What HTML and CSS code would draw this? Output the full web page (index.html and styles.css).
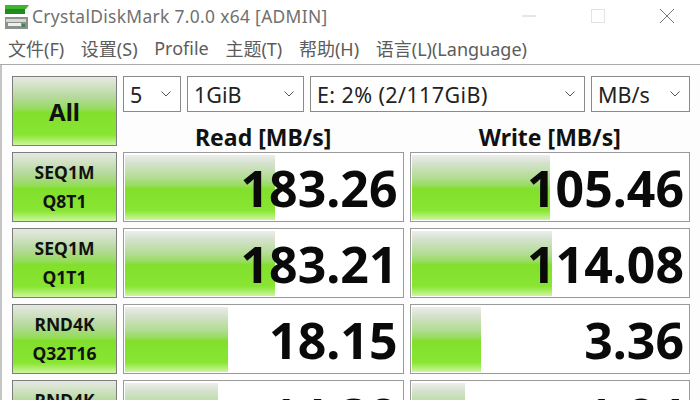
FILE: index.html
```html
<!DOCTYPE html>
<html lang="en">

<head>
    <meta charset="UTF-8">
    <meta name="viewport" content="width=device-width, initial-scale=1.0">
    <title>CrystalDiskMark</title>
    <link rel="stylesheet" href="styles.css">
</head>

<body>

    <div class="titlebar">
        <svg class="app-icon" width="28" height="28" viewBox="0 0 28 28">
            <path d="M4 3h24l-3 4H4z" fill="#3fb52b"/>
            <rect x="4" y="7" width="20" height="5" fill="#1f8a1f"/>
            <path d="M4 15h23v12H4z" fill="#8b918c"/>
            <rect x="5" y="17" width="20" height="3" fill="#d5d9d6"/>
            <rect x="7" y="21" width="13" height="3" fill="#eef0ee"/>
            <rect x="21" y="22" width="3" height="3" fill="#4c7f52"/>
        </svg>
        <span class="app-title">CrystalDiskMark 7.0.0 x64 [ADMIN]</span>
        <div class="win-buttons">
            <svg width="16" height="16" viewBox="0 0 16 16"><path d="M1 8h14" stroke="#ccc" fill="none"/></svg>
            <svg width="16" height="16" viewBox="0 0 16 16"><rect x="1.5" y="1.5" width="13" height="13" stroke="#e2e2e2" fill="none"/></svg>
            <svg width="16" height="16" viewBox="0 0 16 16"><path d="M1 1l14 14M15 1L1 15" stroke="#777" fill="none"/></svg>
        </div>
    </div>

    <div class="menubar">
        <span>文件(F)</span>
        <span>设置(S)</span>
        <span>Profile</span>
        <span>主题(T)</span>
        <span>帮助(H)</span>
        <span>语言(L)(Language)</span>
    </div>

    <div class="main">
        <div class="top">
            <div class="btn btn-all">All</div>
            <div class="top-right">
                <div class="selects">
                    <div class="select sel-count">5 <svg class="chev" width="10" height="6" viewBox="0 0 10 6"><path d="M0.5 0.5L5 5l4.5-4.5" stroke="#555" fill="none"/></svg></div>
                    <div class="select sel-size">1GiB <svg class="chev" width="10" height="6" viewBox="0 0 10 6"><path d="M0.5 0.5L5 5l4.5-4.5" stroke="#555" fill="none"/></svg></div>
                    <div class="select sel-drive">E: 2% (2/117GiB) <svg class="chev" width="10" height="6" viewBox="0 0 10 6"><path d="M0.5 0.5L5 5l4.5-4.5" stroke="#555" fill="none"/></svg></div>
                    <div class="select sel-unit">MB/s <svg class="chev" width="10" height="6" viewBox="0 0 10 6"><path d="M0.5 0.5L5 5l4.5-4.5" stroke="#555" fill="none"/></svg></div>
                </div>
                <div class="heads">
                    <div class="head">Read [MB/s]</div>
                    <div class="head">Write [MB/s]</div>
                </div>
            </div>
        </div>

        <div class="row">
            <div class="btn btn-test">SEQ1M<br>Q8T1</div>
            <div class="cell"><div class="bar" style="width: 150px"></div><span class="num">183.26</span></div>
            <div class="cell"><div class="bar" style="width: 138px"></div><span class="num">105.46</span></div>
        </div>
        <div class="row">
            <div class="btn btn-test">SEQ1M<br>Q1T1</div>
            <div class="cell"><div class="bar" style="width: 150px"></div><span class="num">183.21</span></div>
            <div class="cell"><div class="bar" style="width: 140px"></div><span class="num">114.08</span></div>
        </div>
        <div class="row">
            <div class="btn btn-test">RND4K<br>Q32T16</div>
            <div class="cell"><div class="bar" style="width: 103px"></div><span class="num">18.15</span></div>
            <div class="cell"><div class="bar" style="width: 69px"></div><span class="num">3.36</span></div>
        </div>
        <div class="row">
            <div class="btn btn-test">RND4K<br>Q1T1</div>
            <div class="cell"><div class="bar" style="width: 93px"></div><span class="num">14.38</span></div>
            <div class="cell"><div class="bar" style="width: 53px"></div><span class="num">1.84</span></div>
        </div>
    </div>

</body>

</html>
```

FILE: styles.css
```css
html,
body {
    margin: 0;
    height: 400px;
    overflow: hidden;
}

body {
    font-family: "Noto Sans", "Noto Sans CJK SC", sans-serif;
    background: #fff;
    color: #111;
}

.titlebar {
    display: flex;
    align-items: center;
    height: 32px;
}

.app-icon {
    margin-left: 1px;
    margin-right: 3px;
}

.app-title {
    font-size: 17.4px;
    color: #707070;
    letter-spacing: 0.33px;
}

.win-buttons {
    display: flex;
    gap: 53px;
    margin-left: auto;
    margin-right: 25px;
}

.menubar {
    display: flex;
    gap: 16.7px;
    align-items: center;
    box-sizing: border-box;
    height: 33px;
    padding-left: 8px;
    font-size: 18px;
    color: #5c5c5c;
    border-bottom: 1px solid #aaa;
}

.main {
    padding: 11px 10px 0 10px;
    border-left: 2px solid #c4c4c4;
    background: #fdfdfd;
}

.top {
    display: flex;
    gap: 6px;
    height: 76px;
}

.btn {
    display: flex;
    align-items: center;
    justify-content: center;
    box-sizing: border-box;
    width: 105px;
    flex: none;
    border: 1px solid #7d7d7d;
    font-weight: 700;
    text-align: center;
    background: linear-gradient(#e6e9e3 0, #b5d99c 30%, #94dc58 48%, #82e02c 52%, #88e632 85%, #cdf59e 100%);
}

.btn-all {
    height: 70px;
    font-size: 24px;
}

.btn-test {
    font-size: 17.5px;
    line-height: 29px;
}

.top-right {
    flex: 1;
}

.selects {
    display: flex;
    gap: 6px;
    height: 36px;
}

.select {
    display: flex;
    align-items: center;
    justify-content: space-between;
    box-sizing: border-box;
    height: 36px;
    padding: 0 9px 0 6px;
    font-size: 21.5px;
    color: #222;
    background: #fff;
    border: 1px solid #8a8a8a;
}

.sel-count {
    width: 58px;
}

.sel-size {
    width: 117px;
}

.sel-drive {
    width: 275px;
    letter-spacing: 0.4px;
}

.sel-unit {
    width: 99px;
}

.heads {
    display: flex;
    gap: 6px;
    height: 40px;
}

.head {
    flex: 1;
    text-align: center;
    font-size: 23px;
    font-weight: 700;
    line-height: 50px;
}

.row {
    display: flex;
    gap: 6px;
    height: 70px;
    margin-bottom: 6px;
}

.cell {
    position: relative;
    flex: 1;
    box-sizing: border-box;
    border: 1px solid #9a9a9a;
    background: #fff;
    text-align: right;
    overflow: hidden;
}

.bar {
    position: absolute;
    top: 2px;
    left: 1px;
    bottom: 1px;
    background: linear-gradient(#eceeea 0, #d6e2cf 12%, #b2dd94 35%, #94dc58 48%, #82e02c 52%, #88e632 85%, #cdf59e 100%);
}

.num {
    position: relative;
    display: block;
    padding-right: 5px;
    font-size: 50px;
    font-weight: 700;
    line-height: 71px;
    color: #0a0a0a;
}
```
